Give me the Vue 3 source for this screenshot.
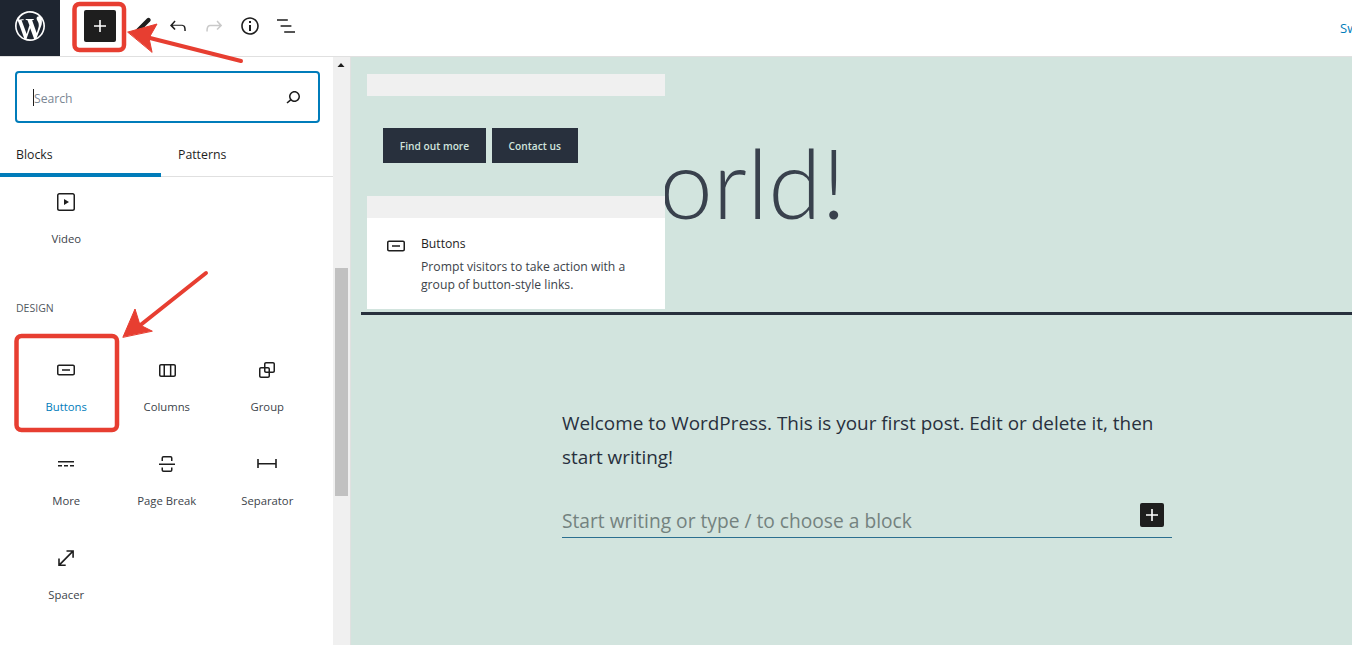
<script setup>
const icons = {
  video: 'M18.7 3H5.3C4 3 3 4 3 5.3v13.4C3 20 4 21 5.3 21h13.4c1.3 0 2.3-1 2.3-2.3V5.3C21 4 20 3 18.7 3zm.8 15.7c0 .4-.4.8-.8.8H5.3c-.4 0-.8-.4-.8-.8V5.3c0-.4.4-.8.8-.8h13.4c.4 0 .8.4.8.8v13.4zM10 15l5-3-5-3v6z',
  buttons: 'M19 6.5H5c-1.1 0-2 .9-2 2v7c0 1.1.9 2 2 2h14c1.1 0 2-.9 2-2v-7c0-1.1-.9-2-2-2zm.5 9c0 .3-.2.5-.5.5H5c-.3 0-.5-.2-.5-.5v-7c0-.3.2-.5.5-.5h14c.3 0 .5.2.5.5v7zM8 12.8h8v-1.5H8v1.5z',
  columns: 'M19 6H6c-1.1 0-2 .9-2 2v9c0 1.1.9 2 2 2h13c1.1 0 2-.9 2-2V8c0-1.1-.9-2-2-2zm-4.1 1.5v10H10v-10h4.9zM5.5 17V8c0-.3.2-.5.5-.5h2.5v10H6c-.3 0-.5-.2-.5-.5zm14 0c0 .3-.2.5-.5.5h-2.6v-10H19c.3 0 .5.2.5.5v9z',
  group: 'M18 4h-7c-1.1 0-2 .9-2 2v3H6c-1.1 0-2 .9-2 2v7c0 1.1.9 2 2 2h7c1.1 0 2-.9 2-2v-3h3c1.1 0 2-.9 2-2V6c0-1.1-.9-2-2-2zm-4.5 14c0 .3-.2.5-.5.5H6c-.3 0-.5-.2-.5-.5v-7c0-.3.2-.5.5-.5h3V13c0 1.1.9 2 2 2h2.5v3zm0-4.5H11c-.3 0-.5-.2-.5-.5v-2.5H13c.3 0 .5.2.5.5v2.5zm5-.5c0 .3-.2.5-.5.5h-3V11c0-1.1-.9-2-2-2h-2.5V6c0-.3.2-.5.5-.5h7c.3 0 .5.2.5.5v7z',
  more: 'M4 9v1.5h16V9H4zm12 5.5h4V13h-4v1.5zm-6 0h4V13h-4v1.5zm-6 0h4V13H4v1.5z',
  pagebreak: 'M17.5 9V6a2 2 0 0 0-2-2h-7a2 2 0 0 0-2 2v3H8V6a.5.5 0 0 1 .5-.5h7a.5.5 0 0 1 .5.5v3h1.5Zm0 6.5V18a2 2 0 0 1-2 2h-7a2 2 0 0 1-2-2v-2.5H8V18c0 .27.22.5.5.5h7a.5.5 0 0 0 .5-.5v-2.5h1.5ZM4 13h16v-1.5H4V13Z',
  separator: 'M20.2 7v4H3.8V7H2.2v9h1.6v-3.5h16.4V16h1.6V7z',
  spacer: 'M12.5 4.2v1.6h4.7L5.8 17.2v-4.7H4.2V20h7.5v-1.6H7L18.3 7v4.8h1.6V4.2z',
  plus: 'M18 11.2h-5.2V6h-1.6v5.2H6v1.6h5.2V18h1.6v-5.2H18z',
  undo: 'M18.3 11.7c-.6-.6-1.4-.9-2.3-.9H6.7l2.9-3.3-1.1-1-4.5 5L8.5 16l1.1-1-2.9-3.3H16c.5 0 .9.2 1.3.5 1 1 1 3.4 1 4.5v.3h1.5v-.2c0-1.5 0-4.3-1.5-5.6z',
  redo: 'M15.6 6.5l-1.1 1 2.9 3.3H8c-.9 0-1.7.3-2.3.9-1.4 1.5-1.4 4.2-1.4 5.6v.2h1.5v-.3c0-1.1 0-3.5 1-4.5.3-.3.7-.5 1.3-.5h9.2L14.5 15l1.1 1.1 4.6-4.6-4.6-5z',
  info: 'M12 3.2c-4.8 0-8.8 3.9-8.8 8.8 0 4.8 3.9 8.8 8.8 8.8 4.8 0 8.8-3.9 8.8-8.8 0-4.8-4-8.8-8.8-8.8zm0 16c-4 0-7.2-3.3-7.2-7.2C4.8 8 8 4.8 12 4.8s7.2 3.3 7.2 7.2c0 4-3.2 7.2-7.2 7.2zM11 17h2v-6h-2v6zm0-8h2V7h-2v2z',
  list: 'M13.8 5.2H3v1.5h10.8V5.2zm-3.6 12v1.5H21v-1.5H10.2zm7.2-6H6.6v1.5h10.8v-1.5z',
  search: 'M13.5 6C10.5 6 8 8.5 8 11.5c0 1.1.3 2.1.9 3l-3.4 3 1 1.1 3.4-2.9c1 .9 2.2 1.4 3.6 1.4 3 0 5.5-2.5 5.5-5.5C19 8.5 16.5 6 13.5 6zm0 9.5c-2.2 0-4-1.8-4-4s1.8-4 4-4 4 1.8 4 4-1.8 4-4 4z'
}
const design = [
  { label: 'Buttons', icon: 'buttons', active: true },
  { label: 'Columns', icon: 'columns' },
  { label: 'Group', icon: 'group' },
  { label: 'More', icon: 'more' },
  { label: 'Page Break', icon: 'pagebreak' },
  { label: 'Separator', icon: 'separator' },
  { label: 'Spacer', icon: 'spacer' }
]
</script>

<template>
  <div class="page">
    <header class="topbar">
      <div class="logo">
        <svg width="30" height="30" viewBox="0 0 20 20"><path fill="#fff" d="M20 10c0-5.51-4.49-10-10-10C4.48 0 0 4.49 0 10c0 5.52 4.48 10 10 10 5.51 0 10-4.48 10-10zM7.78 15.37L4.37 6.22c.55-.02 1.17-.08 1.17-.08.5-.06.44-.67-.06-.65 0 0-1.45.11-2.37.11-.18 0-.37 0-.58-.01C4.12 2.69 6.87 1.11 10 1.11c2.33 0 4.45.87 6.05 2.34-.68-.11-1.65.39-1.65 1.58 0 .74.45 1.36.9 2.1.35.61.55 1.36.55 2.46 0 1.49-1.4 5-1.4 5l-3.03-8.37c.54-.02.82-.17.82-.17.5-.05.44-.79-.06-.76 0 0-1.44.12-2.38.12-.87 0-2.33-.12-2.33-.12-.5-.03-.56.73-.06.76l.92.08 1.26 3.41zM17.41 10c.24-.64.74-1.87.43-4.25.7 1.29 1.05 2.71 1.05 4.25 0 3.29-1.73 6.24-4.4 7.78.97-2.59 1.94-5.2 2.92-7.78zM6.1 18.09C3.12 16.65 1.11 13.53 1.11 10c0-1.3.23-2.48.72-3.59C3.25 10.3 4.67 14.2 6.1 18.09zm4.03-6.63l2.58 6.98c-.86.29-1.76.45-2.71.45-.79 0-1.57-.11-2.29-.33.81-2.38 1.62-4.74 2.42-7.1z"/></svg>
      </div>
      <button class="inserter">
        <svg width="24" height="24" viewBox="0 0 24 24"><path fill="#fff" :d="icons.plus"/></svg>
      </button>
      <div class="tool pencil">
        <svg width="24" height="24" viewBox="0 0 24 24"><path d="M6 18.5 L18.5 6" stroke="#1e1e1e" stroke-width="4.4" stroke-linecap="round"/></svg>
      </div>
      <div class="tool"><svg width="24" height="24" viewBox="0 0 24 24"><path fill="#1e1e1e" :d="icons.undo"/></svg></div>
      <div class="tool"><svg width="24" height="24" viewBox="0 0 24 24"><path fill="#c9c9c9" :d="icons.redo"/></svg></div>
      <div class="tool"><svg width="24" height="24" viewBox="0 0 24 24"><path fill="#1e1e1e" :d="icons.info"/></svg></div>
      <div class="tool"><svg width="24" height="24" viewBox="0 0 24 24"><path fill="#1e1e1e" :d="icons.list"/></svg></div>
      <span class="draft">Switch to draft</span>
    </header>

    <div class="body">
      <aside class="sidebar">
        <div class="search-wrap">
          <div class="search">
            <span class="caret"></span>
            <span class="placeholder">Search</span>
            <svg width="24" height="24" viewBox="0 0 24 24"><path fill="#1e1e1e" :d="icons.search"/></svg>
          </div>
        </div>
        <div class="tabs">
          <div class="tab active">Blocks</div>
          <div class="tab">Patterns</div>
        </div>
        <div class="grid first">
          <div class="item">
            <svg width="24" height="24" viewBox="0 0 24 24"><path fill="#1e1e1e" :d="icons.video"/></svg>
            <span>Video</span>
          </div>
        </div>
        <h2 class="heading">DESIGN</h2>
        <div class="grid">
          <div v-for="b in design" :key="b.label" class="item" :class="{ on: b.active }">
            <svg width="24" height="24" viewBox="0 0 24 24"><path fill="#1e1e1e" :d="icons[b.icon]"/></svg>
            <span>{{ b.label }}</span>
          </div>
        </div>
      </aside>

      <div class="scrollbar">
        <svg class="up" width="8" height="6" viewBox="0 0 8 6"><path d="M4 1 L7.5 5 H.5 Z" fill="#1e1e1e"/></svg>
        <div class="thumb"></div>
      </div>

      <main class="canvas">
        <h1 class="title">orld!</h1>
        <div class="rule"></div>
        <div class="post">
          <p class="para">Welcome to WordPress. This is your first post. Edit or delete it, then start writing!</p>
          <div class="appender">
            <span>Start writing or type / to choose a block</span>
            <button class="mini"><svg width="24" height="24" viewBox="0 0 24 24"><path fill="#fff" :d="icons.plus"/></svg></button>
          </div>
        </div>

        <div class="preview">
          <div class="band"></div>
          <div class="demo">
            <span class="demo-btn">Find out more</span>
            <span class="demo-btn two">Contact us</span>
          </div>
          <div class="band"></div>
          <div class="card">
            <svg width="24" height="24" viewBox="0 0 24 24"><path fill="#1e1e1e" :d="icons.buttons"/></svg>
            <div class="card-text">
              <div class="card-title">Buttons</div>
              <div class="card-desc">Prompt visitors to take action with a group of button-style links.</div>
            </div>
          </div>
        </div>
      </main>
    </div>

    <svg class="marks" width="1352" height="645" viewBox="0 0 1352 645">
      <g fill="none" stroke="#e73e31" stroke-width="4.5">
        <rect x="74.5" y="4" width="49.5" height="46" rx="5"/>
        <rect x="16.5" y="336" width="100.5" height="94" rx="5"/>
      </g>
      <g fill="#e73e31" stroke="#e73e31" stroke-linecap="round">
        <path d="M146 37 L241 61" stroke-width="4"/>
        <path d="M128 32 L157 24 L149 38 L152 52 Z" stroke-width="1"/>
        <path d="M138 327 L206 273" stroke-width="4"/>
        <path d="M123 337 L135 309 L140 325 L152 331 Z" stroke-width="1"/>
      </g>
    </svg>
  </div>
</template>

<style>
html, body { margin: 0; background: #fff; overflow: hidden; }
</style>

<style scoped>
.page { position: relative; width: 1352px; height: 645px; overflow: hidden; font-family: "Open Sans", "Noto Sans", sans-serif; color: #1e1e1e; }
.topbar { display: flex; align-items: center; height: 56px; border-bottom: 1px solid #e0e0e0; overflow: hidden; box-sizing: content-box; }
.logo { width: 60px; height: 56px; flex: none; background: #1e2530; display: flex; align-items: center; justify-content: center; padding-bottom: 4px; box-sizing: border-box; }
.inserter { width: 32px; height: 32px; margin: -4px 0 0 24px; flex: none; padding: 0; border: 0; border-radius: 2px; background: #1e1e1e; display: flex; align-items: center; justify-content: center; }
.tool { width: 24px; height: 24px; margin-left: 12px; margin-top: -4px; flex: none; }
.pencil { margin-left: 14px; }
.draft { margin-left: 1340px; position: absolute; left: 0; top: 19px; font-size: 13px; color: #007cba; white-space: nowrap; }
.body { display: flex; height: 588px; }
.sidebar { width: 333px; flex: none; background: #fff; overflow: hidden; }
.search-wrap { padding: 14px 13px 0 15px; }
.search { display: flex; align-items: center; height: 52px; border: 2px solid #007cba; border-radius: 4px; box-sizing: border-box; padding: 0 13px 0 16px; }
.caret { width: 1px; height: 17px; background: #1e1e1e; }
.placeholder { flex: 1; font-size: 12.2px; line-height: 18px; padding-top: 4px; color: #7b8794; }
.tabs { display: flex; height: 54px; border-bottom: 1px solid #e0e0e0; box-sizing: border-box; }
.tab { width: 161px; font-size: 12.3px; font-weight: 500; padding: 23px 0 0 16px; box-sizing: border-box; line-height: 17px; white-space: nowrap; }
.tab + .tab { padding-left: 17px; }
.tab.active { border-bottom: 4px solid #007cba; height: 54px; }
.grid { display: grid; grid-template-columns: repeat(3, 100.5px); padding-left: 16px; }
.item { height: 94px; display: flex; flex-direction: column; align-items: center; padding-top: 13px; box-sizing: border-box; }
.item span { margin-top: 17px; font-size: 11.3px; line-height: 16px; color: #3c434a; white-space: nowrap; }
.item.on span { color: #007cba; }
.heading { margin: 29px 0 29px 16px; font-size: 10.5px; line-height: 16px; font-weight: 500; color: #50575e; }
.scrollbar { position: relative; width: 17px; flex: none; background: #f0f0f0; }
.up { position: absolute; left: 4px; top: 5px; }
.thumb { position: absolute; left: 2px; width: 13px; top: 211px; height: 228px; background: #c1c1c1; }
.canvas { position: relative; flex: 1; background: #d2e4de; border-left: 1px solid #e0e0e0; overflow: hidden; }
.title { margin: 0; padding-left: 308px; height: 255px; box-sizing: border-box; padding-top: 60px; font-family: Lato, "Open Sans", sans-serif; font-size: 96.5px; line-height: 130px; font-weight: 300; color: #39414d; }
.rule { margin-left: 10px; height: 3px; background: #28303d; }
.post { width: 610px; margin: 91px 0 0 211px; }
.para { margin: 0; font-size: 18.9px; line-height: 34px; color: #28303d; }
.appender { display: flex; justify-content: space-between; align-items: flex-end; height: 51px; margin-top: 13px; border-bottom: 1px solid #2b6f8f; box-sizing: border-box; font-size: 19.2px; line-height: 26px; color: #74827f; padding-bottom: 3px; }
.mini { width: 24px; height: 24px; margin: 0 8px 7px 0; padding: 0; border: 0; border-radius: 2px; background: #1e1e1e; display: flex; align-items: center; justify-content: center; }
.preview { position: absolute; left: 16px; top: 17px; width: 298px; background: #fff; }
.band { height: 22px; background: #f0f0f0; }
.demo { height: 100px; background: #d2e4de; display: flex; gap: 5.5px; padding: 32px 0 0 16px; box-sizing: border-box; }
.demo-btn { width: 103px; height: 35px; background: #28303d; color: #d1e4dd; font-size: 10.2px; font-weight: 600; display: flex; align-items: center; justify-content: center; }
.demo-btn.two { width: 86.5px; }
.card { display: flex; height: 91px; padding: 16px 16px 0 17px; box-sizing: border-box; gap: 13px; }
.card svg { flex: none; }
.card-title { font-size: 12.2px; line-height: 18px; padding-top: 1px; color: #1e1e1e; }
.card-desc { margin-top: 5px; font-size: 12.2px; line-height: 18px; color: #3c434a; }
.marks { position: absolute; left: 0; top: 0; pointer-events: none; }
</style>
